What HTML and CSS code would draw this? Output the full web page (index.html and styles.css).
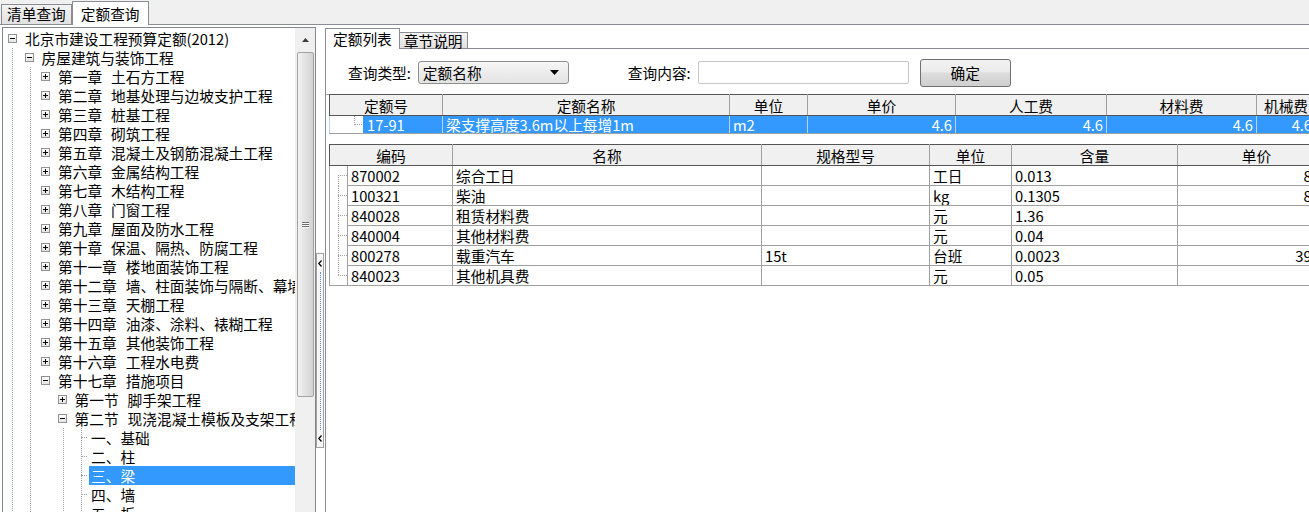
FILE: index.html
```html
<!DOCTYPE html>
<html lang="zh-CN">
<head>
    <meta charset="UTF-8">
    <title>定额查询</title>
    <link rel="stylesheet" href="styles.css">
</head>
<body>

<div class="top-tabs">
    <span class="tab">清单查询</span>
    <span class="tab active">定额查询</span>
</div>

<div class="main">
    <!-- 定额目录树 -->
    <div class="tree-box">
        <div class="tree">
            <div class="row"><i class="node"></i><span class="label">北京市建设工程预算定额(2012)</span></div>
            <div class="branch b0">
                <div class="row d1"><i class="node"></i><span class="label">房屋建筑与装饰工程</span></div>
                <div class="branch b1">
                    <div class="row d2"><i class="node plus"></i><span class="label"><span class="sn">第一章</span>土石方工程</span></div>
                    <div class="row d2"><i class="node plus"></i><span class="label"><span class="sn">第二章</span>地基处理与边坡支护工程</span></div>
                    <div class="row d2"><i class="node plus"></i><span class="label"><span class="sn">第三章</span>桩基工程</span></div>
                    <div class="row d2"><i class="node plus"></i><span class="label"><span class="sn">第四章</span>砌筑工程</span></div>
                    <div class="row d2"><i class="node plus"></i><span class="label"><span class="sn">第五章</span>混凝土及钢筋混凝土工程</span></div>
                    <div class="row d2"><i class="node plus"></i><span class="label"><span class="sn">第六章</span>金属结构工程</span></div>
                    <div class="row d2"><i class="node plus"></i><span class="label"><span class="sn">第七章</span>木结构工程</span></div>
                    <div class="row d2"><i class="node plus"></i><span class="label"><span class="sn">第八章</span>门窗工程</span></div>
                    <div class="row d2"><i class="node plus"></i><span class="label"><span class="sn">第九章</span>屋面及防水工程</span></div>
                    <div class="row d2"><i class="node plus"></i><span class="label"><span class="sn">第十章</span>保温、隔热、防腐工程</span></div>
                    <div class="row d2"><i class="node plus"></i><span class="label"><span class="sn">第十一章</span>楼地面装饰工程</span></div>
                    <div class="row d2"><i class="node plus"></i><span class="label"><span class="sn">第十二章</span>墙、柱面装饰与隔断、幕墙工程</span></div>
                    <div class="row d2"><i class="node plus"></i><span class="label"><span class="sn">第十三章</span>天棚工程</span></div>
                    <div class="row d2"><i class="node plus"></i><span class="label"><span class="sn">第十四章</span>油漆、涂料、裱糊工程</span></div>
                    <div class="row d2"><i class="node plus"></i><span class="label"><span class="sn">第十五章</span>其他装饰工程</span></div>
                    <div class="row d2"><i class="node plus"></i><span class="label"><span class="sn">第十六章</span>工程水电费</span></div>
                    <div class="row d2"><i class="node"></i><span class="label"><span class="sn">第十七章</span>措施项目</span></div>
                    <div class="row d3"><i class="node plus"></i><span class="label"><span class="sn">第一节</span>脚手架工程</span></div>
                    <div class="row d3"><i class="node"></i><span class="label"><span class="sn">第二节</span>现浇混凝土模板及支架工程</span></div>
                    <div class="branch b3">
                        <div class="row d4"><i class="twig"></i><span class="label">一、基础</span></div>
                        <div class="row d4"><i class="twig"></i><span class="label">二、柱</span></div>
                        <div class="row d4"><i class="twig"></i><span class="label selected">三、梁</span></div>
                        <div class="row d4"><i class="twig"></i><span class="label">四、墙</span></div>
                        <div class="row d4"><i class="twig"></i><span class="label">五、板</span></div>
                    </div>
                </div>
            </div>
        </div>
        <div class="vscroll">
            <div class="sb-up">
                <svg width="7" height="4" viewBox="0 0 7 4"><path d="M0 4 L3.5 0 L7 4 Z" fill="#3c3c3c"/></svg>
            </div>
            <div class="sb-thumb"><span class="grip"></span></div>
        </div>
    </div>

    <!-- 分隔条 -->
    <div class="splitter">
        <div class="split-btn">
            <svg width="4" height="7" viewBox="0 0 4 7"><path d="M3.5 0.5 L0.8 3.5 L3.5 6.5" fill="none" stroke="#000" stroke-width="1.2"/></svg>
            <span class="dots"></span>
            <svg width="4" height="7" viewBox="0 0 4 7"><path d="M3.5 0.5 L0.8 3.5 L3.5 6.5" fill="none" stroke="#000" stroke-width="1.2"/></svg>
        </div>
    </div>

    <div class="right">
        <div class="page-tabs">
            <span class="page-tab active">定额列表</span>
            <span class="page-tab">章节说明</span>
        </div>
        <div class="page">
            <!-- 查询条件 -->
            <div class="query">
                <span class="q-label">查询类型:</span>
                <div class="combo">
                    <span class="combo-text">定额名称</span>
                    <svg width="9" height="5" viewBox="0 0 9 5"><path d="M0 0 L9 0 L4.5 5 Z" fill="#000"/></svg>
                </div>
                <span class="q-label second">查询内容:</span>
                <input type="text" class="search">
                <button class="btn">确定</button>
            </div>

            <div class="grids">
                <!-- 定额列表 -->
                <table class="grid quota">
                    <colgroup>
                        <col class="q-tree"><col class="q-code"><col class="q-name"><col class="q-unit">
                        <col class="q-price"><col class="q-labor"><col class="q-mat"><col class="q-mach">
                    </colgroup>
                    <tr>
                        <th colspan="2">定额号</th><th>定额名称</th><th>单位</th>
                        <th>单价</th><th>人工费</th><th>材料费</th><th>机械费</th>
                    </tr>
                    <tr class="sel">
                        <td class="t"><i class="elbow"></i></td>
                        <td>17-91</td>
                        <td>梁支撑高度3.6m以上每增1m</td>
                        <td>m2</td>
                        <td class="num">4.6</td>
                        <td class="num">4.6</td>
                        <td class="num">4.6</td>
                        <td class="num">4.6</td>
                    </tr>
                </table>

                <!-- 工料机明细 -->
                <table class="grid items">
                    <colgroup>
                        <col class="i-tree"><col class="i-code"><col class="i-name"><col class="i-spec">
                        <col class="i-unit"><col class="i-qty"><col class="i-price">
                    </colgroup>
                    <tr>
                        <th colspan="2">编码</th><th>名称</th><th>规格型号</th>
                        <th>单位</th><th>含量</th><th>单价</th>
                    </tr>
                    <tr>
                        <td class="t top"></td><td>870002</td><td>综合工日</td><td></td>
                        <td>工日</td><td>0.013</td><td class="num">83.2</td>
                    </tr>
                    <tr>
                        <td class="t"></td><td>100321</td><td>柴油</td><td></td>
                        <td>kg</td><td>0.1305</td><td class="num">8.98</td>
                    </tr>
                    <tr>
                        <td class="t"></td><td>840028</td><td>租赁材料费</td><td></td>
                        <td>元</td><td>1.36</td><td class="num">1</td>
                    </tr>
                    <tr>
                        <td class="t"></td><td>840004</td><td>其他材料费</td><td></td>
                        <td>元</td><td>0.04</td><td class="num">1</td>
                    </tr>
                    <tr>
                        <td class="t"></td><td>800278</td><td>载重汽车</td><td>15t</td>
                        <td>台班</td><td>0.0023</td><td class="num">392.4</td>
                    </tr>
                    <tr>
                        <td class="t end"></td><td>840023</td><td>其他机具费</td><td></td>
                        <td>元</td><td>0.05</td><td class="num">1</td>
                    </tr>
                </table>
            </div>
        </div>
    </div>
</div>

</body>
</html>
```

FILE: styles.css
```css
* {
    box-sizing: border-box;
}
body {
    margin: 0;
    width: 1309px;
    height: 512px;
    overflow: hidden;
    background-color: #fff;
    color: #000;
    font-family: "Noto Sans CJK SC", "Noto Sans", sans-serif;
    font-size: 14.7px;
}

/* 顶部页签 */
.top-tabs {
    display: flex;
    align-items: flex-end;
    height: 25px;
    padding-left: 1px;
    background-color: #f0f0f0;
    border-bottom: 1px solid #898c95;
}
.tab {
    height: 20px;
    padding: 0 5px;
    line-height: 18px;
    border: 1px solid #898c95;
    border-bottom: none;
    background: linear-gradient(#f3f3f3, #e1e1e1);
}
.tab.active {
    height: 24px;
    margin-bottom: -1px;
    padding: 0 8px;
    line-height: 23px;
    background: #fff;
}

.main {
    display: flex;
    height: 487px;
    padding: 2px 0 0 2px;
}

/* 目录树 */
.tree-box {
    display: flex;
    flex-shrink: 0;
    width: 314px;
    height: 490px;
    border: 1px solid #828790;
}
.tree {
    flex: 1;
    min-width: 0;
    overflow: hidden;
    padding-top: 1px;
    white-space: nowrap;
}
.row {
    display: flex;
    align-items: center;
    height: 19px;
}
.d1 { padding-left: 16.5px; }
.d2 { padding-left: 33px; }
.d3 { padding-left: 49.5px; }
.d4 { padding-left: 66px; }

.branch {
    background-repeat: no-repeat;
}
.b0 {
    background-image: repeating-linear-gradient(#a0a0a0 0 1px, transparent 1px 2px);
    background-size: 1px 100%;
    background-position: 9px 0;
}
.b1 {
    background-image: repeating-linear-gradient(#a0a0a0 0 1px, transparent 1px 2px);
    background-size: 1px 100%;
    background-position: 27px 0;
}
.b3 {
    background-image: repeating-linear-gradient(#a0a0a0 0 1px, transparent 1px 2px),
                      repeating-linear-gradient(#a0a0a0 0 1px, transparent 1px 2px);
    background-size: 1px 100%, 1px 100%;
    background-position: 60px 0, 78px 0;
}

.node {
    flex-shrink: 0;
    display: grid;
    place-items: center;
    width: 9px;
    height: 9px;
    margin: 0 4px 0 5px;
    border: 1px solid #919191;
    background: linear-gradient(#fff, #e4e4e4);
}
.node::before {
    content: "";
    grid-area: 1 / 1;
    width: 5px;
    height: 1px;
    background: #000;
}
.node.plus::after {
    content: "";
    grid-area: 1 / 1;
    width: 1px;
    height: 5px;
    background: #000;
}
.twig {
    flex-shrink: 0;
    display: flex;
    align-items: center;
    width: 18px;
    height: 19px;
}
.twig::after {
    content: "";
    width: 6px;
    margin-left: 12px;
    border-top: 1px dotted #a0a0a0;
}
.label {
    flex: 1;
    margin-left: 2px;
    padding-left: 2px;
    line-height: 19px;
}
.label.selected {
    background-color: #3399ff;
    color: #fff;
}
.sn {
    margin-right: 9px;
}

/* 滚动条 */
.vscroll {
    display: flex;
    flex-direction: column;
    align-items: center;
    flex-shrink: 0;
    width: 20px;
    background-color: #f0f0f0;
}
.sb-up {
    display: flex;
    align-items: center;
    justify-content: center;
    height: 24px;
}
.sb-thumb {
    display: flex;
    align-items: center;
    justify-content: center;
    width: 17px;
    height: 345px;
    border: 1px solid #a3a3a3;
    border-radius: 2px;
    background: linear-gradient(to right, #f2f2f2, #e3e3e3 45%, #d2d2d2);
}
.grip {
    width: 7px;
    height: 6px;
    background: repeating-linear-gradient(#6e6e6e 0 1px, #fafafa 1px 2px);
}

/* 分隔条 */
.splitter {
    flex-shrink: 0;
    width: 9px;
    padding-top: 226px;
}
.split-btn {
    display: flex;
    flex-direction: column;
    align-items: center;
    width: 8px;
    height: 195px;
    padding: 6px 0 5px;
    border: 1px solid #a0a0a0;
    background-color: #f7f7f7;
}
.split-btn .dots {
    flex: 1;
    margin: 5px 0;
    border-left: 1px dotted #5a88d0;
}

/* 右侧 */
.right {
    flex: 1;
    min-width: 0;
    margin-top: 1px;
    display: flex;
    flex-direction: column;
    overflow: hidden;
}
.page-tabs {
    display: flex;
    align-items: flex-end;
    height: 21px;
    border-bottom: 1px solid #898c95;
}
.page-tab {
    height: 16px;
    padding: 0 4px;
    line-height: 15px;
    border: 1px solid #898c95;
    border-bottom: none;
    border-left: none;
    background: linear-gradient(#f3f3f3, #e1e1e1);
}
.page-tab.active {
    height: 21px;
    margin-bottom: -1px;
    padding: 0 7px;
    line-height: 19px;
    border-left: 1px solid #898c95;
    background: #fff;
}
.page {
    flex: 1;
    border-left: 1px solid #898c95;
}

.query {
    display: flex;
    align-items: center;
    height: 46px;
    padding: 2px 0 0 22px;
    border-bottom: 1px solid #a0a0a0;
}
.q-label {
    margin-right: 7px;
}
.q-label.second {
    margin-left: 59px;
}
.combo {
    display: flex;
    align-items: center;
    width: 151px;
    height: 23px;
    padding: 0 9px 0 4px;
    border: 1px solid #8e8f8f;
    border-radius: 3px;
    background: linear-gradient(#f6f6f6, #e3e3e3);
}
.combo-text {
    flex: 1;
}
.search {
    width: 211px;
    height: 23px;
    margin: 0;
    border: 1px solid #c6c6c6;
    border-radius: 2px;
    background: #fff;
}
.btn {
    width: 91px;
    height: 28px;
    margin-left: 11px;
    padding: 0;
    border: 1px solid #707070;
    border-radius: 3px;
    background: linear-gradient(#f2f2f2, #ebebeb 45%, #dddddd 50%, #cfcfcf);
    font: inherit;
    color: #000;
}

/* 表格 */
.grids {
    padding-left: 3px;
}
.grid {
    border-collapse: collapse;
    table-layout: fixed;
}
.quota {
    width: 986px;
    margin-top: -1px;
}
.items {
    width: 1006px;
    margin-top: 10px;
}
.q-tree { width: 34px; }
.q-code { width: 79px; }
.q-name { width: 287px; }
.q-unit { width: 78px; }
.q-price { width: 148px; }
.q-labor { width: 151px; }
.q-mat { width: 150px; }
.q-mach { width: 59px; }
.i-tree { width: 18px; }
.i-code { width: 105px; }
.i-name { width: 309px; }
.i-spec { width: 168px; }
.i-unit { width: 82px; }
.i-qty { width: 166px; }
.i-price { width: 158px; }

.grid th {
    height: 21px;
    padding: 0;
    font-weight: normal;
    line-height: 19px;
    white-space: nowrap;
    overflow: hidden;
    background-color: #f0f0f0;
    border: 1px solid #a0a0a0;
    border-top-color: #555;
    border-bottom-color: #555;
}
.grid th:first-child {
    border-left-color: #555;
}
.grid td {
    padding: 0 3px;
    white-space: nowrap;
    overflow: hidden;
    border: 1px solid #a0a0a0;
}
.quota td {
    height: 18px;
    line-height: 16px;
}
.items td {
    height: 20px;
    line-height: 18px;
}
.num {
    text-align: right;
}

.sel td {
    background-color: #3399ff;
    color: #fff;
    border-left-color: #b7d5f5;
    border-right-color: #b7d5f5;
}
.sel td.t {
    padding: 0;
    vertical-align: top;
    background-color: #fff;
    border-right-color: #3399ff;
}
.elbow {
    display: block;
    width: 10px;
    height: 9px;
    margin-left: 24px;
    border-left: 1px dotted #a0a0a0;
    border-bottom: 1px dotted #a0a0a0;
}

.items td.t {
    padding: 0;
    border-top: none;
    border-bottom: none;
    background-repeat: no-repeat;
    background-image: repeating-linear-gradient(#a0a0a0 0 1px, transparent 1px 2px),
                      repeating-linear-gradient(to right, #a0a0a0 0 1px, transparent 1px 2px);
    background-size: 1px 100%, 10px 1px;
    background-position: 8px 0, 8px 9px;
}
.items td.t.top {
    background-size: 1px 11px, 10px 1px;
    background-position: 8px 9px, 8px 9px;
}
.items td.t.end {
    background-size: 1px 10px, 10px 1px;
    background-position: 8px 0, 8px 9px;
    border-bottom: 1px solid #a0a0a0;
}
```
